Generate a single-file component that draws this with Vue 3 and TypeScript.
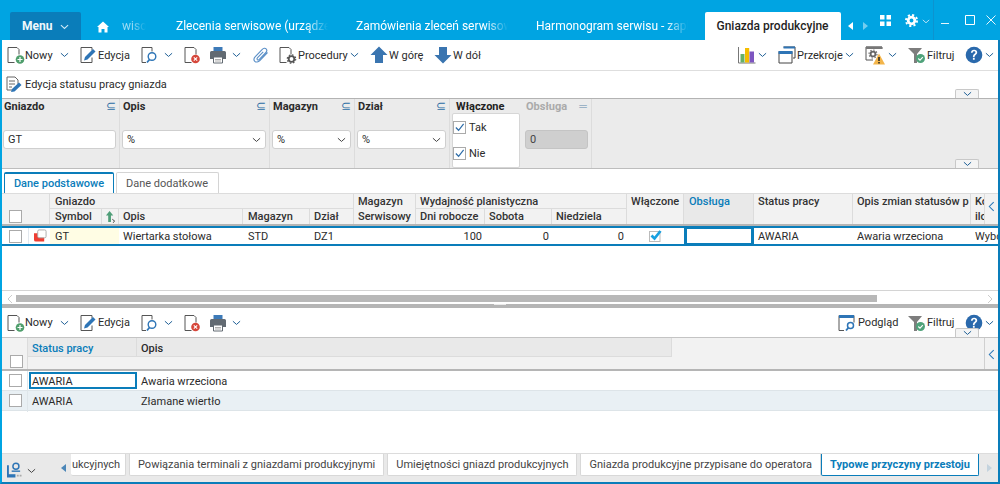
<script setup lang="ts">
interface Tool { icon: string; w: number; label?: string; chev?: boolean }
const topLeft: Tool[] = [
  { icon: 'new', w: 73, label: 'Nowy', chev: true },
  { icon: 'edit', w: 61, label: 'Edycja' },
  { icon: 'find', w: 43, chev: true },
  { icon: 'del', w: 25 },
  { icon: 'print', w: 43, chev: true },
  { icon: 'clip', w: 27 },
  { icon: 'proc', w: 91, label: 'Procedury', chev: true },
  { icon: 'up', w: 64, label: 'W górę' },
  { icon: 'down', w: 50, label: 'W dół' },
]
const topRight: Tool[] = [
  { icon: 'chart', w: 40, chev: true },
  { icon: 'cross', w: 87, label: 'Przekroje', chev: true },
  { icon: 'warn', w: 43, chev: true },
  { icon: 'filter', w: 57, label: 'Filtruj' },
  { icon: 'help', w: 29, chev: true },
]
const lowLeft: Tool[] = topLeft.slice(0, 5)
const lowRight: Tool[] = [
  { icon: 'view', w: 70, label: 'Podgląd' },
  { icon: 'filter', w: 57, label: 'Filtruj' },
  { icon: 'help', w: 29, chev: true },
]
const appTabs = ['Zlecenia serwisowe (urządzenia)', 'Zamówienia zleceń serwisowych', 'Harmonogram serwisu - zaplanowane']
const filters = [
  { name: 'Opis', cls: 'f-opis' },
  { name: 'Magazyn', cls: 'f-mag' },
  { name: 'Dział', cls: 'f-dzial' },
]
const bottomTabs = ['Powiązania terminali z gniazdami produkcyjnymi', 'Umiejętności gniazd produkcyjnych', 'Gniazda produkcyjne przypisane do operatora']
</script>

<template>
  <div class="win">
    <svg class="defs" aria-hidden="true">
      <symbol id="page" viewBox="0 0 18 18"><path d="M1 1.500h9l2 2v5M1 1.500v15h6.500" fill="none" stroke="#555" stroke-width="1"/></symbol>
      <symbol id="new" viewBox="0 0 18 18"><use href="#page"/><circle cx="13" cy="13.500" r="4.300" fill="#4f9e6c"/><path d="M13 11v5M10.500 13.500h5" stroke="#fff" stroke-width="1.200"/></symbol>
      <symbol id="edit" viewBox="0 0 18 18"><path d="M1 1.500h11v3M1 1.500v15h11v-5" fill="none" stroke="#555"/><path d="M4 14.500l1-3.500 8-8 2.500 2.500-8 8z" fill="#2e75b6"/></symbol>
      <symbol id="find" viewBox="0 0 18 18"><path d="M1 1.500h10v4M1 1.500v15h4" fill="none" stroke="#555"/><circle cx="11" cy="10.500" r="3.800" fill="none" stroke="#2e75b6" stroke-width="1.400"/><path d="M8.500 13.500L6 16.500" stroke="#2e75b6" stroke-width="1.800"/></symbol>
      <symbol id="del" viewBox="0 0 18 18"><use href="#page"/><circle cx="11.500" cy="13" r="4.300" fill="#d6463a"/><path d="M9.800 11.300l3.400 3.400M13.200 11.300l-3.400 3.400" stroke="#fff" stroke-width="1.100"/></symbol>
      <symbol id="print" viewBox="0 0 18 18"><path d="M4.500 1h9v5h-9z" fill="#3d7ab8"/><path d="M1 6.500a1.500 1.500 0 0 1 1.500-1.500h13A1.500 1.500 0 0 1 17 6.500V13h-3v-2H4v2H1z" fill="#626a72"/><path d="M4.500 11h9v6h-9z" fill="#fff" stroke="#626a72"/><path d="M6 13.500h6M6 15h6" stroke="#999" stroke-width=".8"/></symbol>
      <symbol id="clip" viewBox="0 0 18 18"><path d="M15.500 6.500L7.800 14.600c-1.600 1.700-3.800 1.900-5 .7-1.200-1.200-1-3 .5-4.600l7-7.300c1.200-1.200 2.800-1.500 3.800-.5 1 1 .8 2.500-.4 3.700l-6.400 6.700c-.7.7-1.500.8-2 .3-.5-.5-.4-1.300.3-2l5.600-5.800" fill="none" stroke="#5a8fc7" stroke-width="1.100"/></symbol>
      <symbol id="proc" viewBox="0 0 18 18"><use href="#page"/><circle cx="12.500" cy="13" r="2.800" fill="none" stroke="#555" stroke-width="1.800"/><circle cx="12.500" cy="13" r="4.200" fill="none" stroke="#555" stroke-width="1.200" stroke-dasharray="1.600 1.700"/></symbol>
      <symbol id="up" viewBox="0 0 18 18"><path d="M9 .5L17.500 9H13v8H5V9H.5z" fill="#3a75b0"/></symbol>
      <symbol id="down" viewBox="0 0 18 18"><path d="M9 17.500L17.500 9H13V1H5v8H.5z" fill="#3a75b0"/></symbol>
      <symbol id="chart" viewBox="0 0 18 18"><path d="M.5 1v16h17" fill="none" stroke="#777"/><path d="M2.500 8h4v8.500h-4z" fill="#67b168"/><path d="M7 2h4.200v14.500H7z" fill="#f5bd00"/><path d="M11.500 5.500h4.500v11h-4.500z" fill="#7d55c0"/></symbol>
      <symbol id="cross" viewBox="0 0 18 18"><path d="M5.500 1h11.500v11h-2" fill="none" stroke="#444"/><path d="M5.500.5h11.500v2H5.500z" fill="#2e75b6"/><path d="M1 5.500h13v11.500H1z" fill="#fff" stroke="#444"/><path d="M.5 5h14v3H.5z" fill="#2e75b6"/></symbol>
      <symbol id="warn" viewBox="0 0 20 20"><path d="M1 2h16v2M1 2v13h7" fill="none" stroke="#555"/><path d="M1 1.500h16v2.500H1z" fill="#777"/><circle cx="8" cy="9" r="2.400" fill="none" stroke="#666" stroke-width="1.800"/><circle cx="8" cy="9" r="4" fill="none" stroke="#666" stroke-width="1.100" stroke-dasharray="1.500 1.600"/><path d="M14 8.500l6 11H8z" fill="#f3b54a"/><path d="M14 12v4M14 17v1.500" stroke="#222" stroke-width="1.500"/></symbol>
      <symbol id="filter" viewBox="0 0 18 18"><path d="M0 2h14L9 8v9H6V8z" fill="#7d7d7d"/><circle cx="12.500" cy="12.500" r="4.500" fill="#4fa27a"/><path d="M10.300 12.500l1.700 1.700 2.800-3" fill="none" stroke="#fff" stroke-width="1.100"/></symbol>
      <symbol id="help" viewBox="0 0 18 18"><circle cx="9" cy="9" r="8.300" fill="#2a69ac"/><path d="M5.900 6.800C6 4.800 7.300 3.800 9.100 3.800c1.900 0 3.100 1.100 3.100 2.700 0 2.300-2.600 2.300-2.600 4.400H7.900c0-3 2.500-3 2.500-4.400 0-.8-.5-1.300-1.300-1.300-.9 0-1.400.6-1.500 1.600zM7.900 11.800h1.800v1.900H7.900z" fill="#fff"/></symbol>
      <symbol id="view" viewBox="0 0 18 18"><path d="M6 16.500H1V1.500h15v7" fill="none" stroke="#555"/><path d="M1 1h15v3H1z" fill="#2e75b6"/><circle cx="12.500" cy="11.500" r="3" fill="none" stroke="#2e75b6" stroke-width="1.500"/><path d="M10.300 13.800L8 16.500" stroke="#2e75b6" stroke-width="1.800"/></symbol>
      <symbol id="chev" viewBox="0 0 10 6"><path d="M1 1l4 3.600L9 1" fill="none" stroke="#1e5f96" stroke-width="1.100"/></symbol>
      <symbol id="chevgray" viewBox="0 0 10 6"><path d="M1 1l4 3.600L9 1" fill="none" stroke="#444" stroke-width="1.100"/></symbol>
      <symbol id="tick" viewBox="0 0 12 12"><path d="M2 6l3 3 5.500-7" fill="none" stroke="#2d6ca8" stroke-width="1.300"/></symbol>
    </svg>

    <header class="title">
      <div class="menu">Menu <svg class="tchev" viewBox="0 0 10 6"><path d="M1 1l4 3.600L9 1" fill="none" stroke="#cfe9f7" stroke-width="1.200"/></svg></div>
      <svg class="home" viewBox="0 0 12 12"><path d="M6 .5L12 6h-1.500v5.500H7.500V8h-3v3.500h-3V6H0z" fill="#fff"/></svg>
      <div class="app-tab first"><span>wiso</span></div>
      <div v-for="t in appTabs" :key="t" class="app-tab"><span>{{ t }}</span></div>
      <div class="app-active">Gniazda produkcyjne</div>
      <div class="tri left"></div>
      <div class="tri right"></div>
      <div class="wctl">
        <svg class="apps" viewBox="0 0 11 11"><path d="M0 0h4.500v4.500H0zM6.500 0H11v4.500H6.500zM0 6.500h4.500V11H0zM6.500 6.500H11V11H6.500z" fill="#fff"/></svg>
        <svg class="gear" viewBox="0 0 14 14"><circle cx="7" cy="7" r="3.600" fill="none" stroke="#fff" stroke-width="3"/><circle cx="7" cy="7" r="6" fill="none" stroke="#fff" stroke-width="2" stroke-dasharray="2.300 2.400"/></svg>
        <svg class="tchev2" viewBox="0 0 10 6"><path d="M1 1l4 3.600L9 1" fill="none" stroke="#cfe9f7" stroke-width="1.100"/></svg>
        <i class="sep"></i>
        <svg class="min" viewBox="0 0 8 8"><path d="M0 7.500h8" stroke="#e6f5fc"/></svg>
        <svg class="max" viewBox="0 0 10 10"><path d="M.5.500h9v9h-9z" fill="none" stroke="#fff"/></svg>
        <svg class="cls" viewBox="0 0 10 10"><path d="M.5.500l9 9M9.500.500l-9 9" stroke="#e6f5fc"/></svg>
      </div>
    </header>

    <div class="body">
      <div class="toolbar">
        <div class="tools">
          <div v-for="(b, i) in topLeft" :key="i" class="tool" :class="'t-' + b.icon" :style="{ width: b.w + 'px' }">
            <svg class="ic"><use :href="'#' + b.icon"/></svg>
            <span v-if="b.label">{{ b.label }}</span>
            <svg v-if="b.chev" class="chev"><use href="#chev"/></svg>
          </div>
        </div>
        <div class="tools">
          <div v-for="(b, i) in topRight" :key="i" class="tool" :class="'t-' + b.icon" :style="{ width: b.w + 'px' }">
            <svg class="ic"><use :href="'#' + b.icon"/></svg>
            <span v-if="b.label">{{ b.label }}</span>
            <svg v-if="b.chev" class="chev"><use href="#chev"/></svg>
          </div>
        </div>
      </div>

      <div class="subbar">
        <svg class="ic" viewBox="0 0 18 18"><path d="M2 1h8l3 3v4M2 1v13h5M4 5h6M4 8h6M4 11h3" fill="none" stroke="#666"/><path d="M6 16l1-3 7-6.500 2.500 2.500-7 6.500z" fill="#2e75b6"/></svg>
        <span>Edycja statusu pracy gniazda</span>
        <div class="fold up"><svg class="chev nom"><use href="#chev"/></svg></div>
      </div>

      <div class="filter">
        <div class="fcol f-gn">
          <div class="fhead">Gniazdo<em>⊆</em></div>
          <div class="finput">GT</div>
        </div>
        <div v-for="f in filters" :key="f.name" class="fcol" :class="f.cls">
          <div class="fhead">{{ f.name }}<em>⊆</em></div>
          <div class="finput">%<svg class="fchev"><use href="#chevgray"/></svg></div>
        </div>
        <div class="fcol f-wl">
          <div class="fhead wl">Włączone</div>
          <div class="fbox">
            <label><i class="box"><svg viewBox="0 0 12 12"><use href="#tick"/></svg></i>Tak</label>
            <label><i class="box"><svg viewBox="0 0 12 12"><use href="#tick"/></svg></i>Nie</label>
          </div>
        </div>
        <div class="fcol f-ob">
          <div class="fhead dis">Obsługa<em>=</em></div>
          <div class="finput off">0</div>
        </div>
        <div class="fold down"><svg class="chev nom"><use href="#chev"/></svg></div>
      </div>

      <div class="tabs">
        <div class="tab on">Dane podstawowe</div>
        <div class="tab">Dane dodatkowe</div>
      </div>

      <div class="grid head">
        <div class="h c-sel"><i class="cb"></i></div>
        <div class="h c-gn">Gniazdo</div>
        <div class="h c-sym">Symbol</div>
        <div class="h c-sort"><svg viewBox="0 0 12 14"><path d="M5 1L1 6h2.500v7h3V6H9z" fill="#4f9e78"/><path d="M8 10l2.500 2-2 2" fill="none" stroke="#333"/></svg></div>
        <div class="h c-op">Opis</div>
        <div class="h c-mg">Magazyn</div>
        <div class="h c-dz">Dział</div>
        <div class="h c-ms">Magazyn<br>Serwisowy</div>
        <div class="h c-wy">Wydajność planistyczna</div>
        <div class="h c-dr">Dni robocze</div>
        <div class="h c-so">Sobota</div>
        <div class="h c-ni">Niedziela</div>
        <div class="h c-wl">Włączone</div>
        <div class="h c-ob act">Obsługa</div>
        <div class="h c-st">Status pracy</div>
        <div class="h c-oz">Opis zmian statusów p</div>
        <div class="h c-ko">Ko<br>ilo</div>
        <div class="h c-ar"><svg class="side" viewBox="0 0 8 12"><path d="M6.500 1L1.500 6l5 5" fill="none" stroke="#2b78b8" stroke-width="1.200"/></svg></div>
      </div>
      <div class="grid row">
        <div class="d"><i class="cb"></i></div>
        <div class="d ric"><svg viewBox="0 0 14 13"><path d="M0 4h11v9H2a2 2 0 0 1-2-2z" fill="#ee3e33"/><rect x="4" y=".5" width="9" height="8.500" rx="1.500" fill="#fff" stroke="#aaa"/></svg></div>
        <div class="d sym">GT</div>
        <div class="d tight4">Wiertarka stołowa</div>
        <div class="d">STD</div>
        <div class="d tight4">DZ1</div>
        <div class="d"></div>
        <div class="d num">100</div>
        <div class="d num">0</div>
        <div class="d num">0</div>
        <div class="d mid"><svg class="chk" viewBox="0 0 13 13"><rect x=".5" y="2.500" width="10.500" height="10" fill="#fff" stroke="#bbb"/><path d="M2.500 6.500L5.500 9.500 11.500 2" fill="none" stroke="#18a0e0" stroke-width="2.800"/></svg></div>
        <div class="d sel"></div>
        <div class="d tight4">AWARIA</div>
        <div class="d tight4">Awaria wrzeciona</div>
        <div class="d wide2">Wybór</div>
      </div>
      <div class="spacer1"></div>
      <div class="hscroll">
        <svg class="sarrow" viewBox="0 0 6 10"><path d="M5 1L1 5l4 4" fill="none" stroke="#ccc"/></svg>
        <div class="thumb"></div>
        <svg class="sarrow" viewBox="0 0 6 10"><path d="M1 1l4 4-4 4" fill="none" stroke="#ccc"/></svg>
      </div>
      <div class="splitter"><i></i></div>

      <div class="toolbar low">
        <div class="tools">
          <div v-for="(b, i) in lowLeft" :key="i" class="tool" :class="'t-' + b.icon" :style="{ width: b.w + 'px' }">
            <svg class="ic"><use :href="'#' + b.icon"/></svg>
            <span v-if="b.label">{{ b.label }}</span>
            <svg v-if="b.chev" class="chev"><use href="#chev"/></svg>
          </div>
        </div>
        <div class="tools">
          <div v-for="(b, i) in lowRight" :key="i" class="tool" :class="'t-' + b.icon" :style="{ width: b.w + 'px' }">
            <svg class="ic"><use :href="'#' + b.icon"/></svg>
            <span v-if="b.label">{{ b.label }}</span>
            <svg v-if="b.chev" class="chev"><use href="#chev"/></svg>
          </div>
        </div>
        <div class="fold low-fold"><svg class="chev nom"><use href="#chev"/></svg></div>
      </div>

      <div class="g2 ghead">
        <div class="g2sel"><i class="cb"></i></div>
        <div class="g2t act">Status pracy</div>
        <div class="g2t">Opis</div>
        <div class="g2rest"></div>
        <div class="g2ar"><svg class="side" viewBox="0 0 8 12"><path d="M6.500 1L1.500 6l5 5" fill="none" stroke="#2b78b8" stroke-width="1.200"/></svg></div>
      </div>
      <div class="g2 grow">
        <div class="g2c"><i class="cb"></i></div>
        <div class="g2st cur">AWARIA</div>
        <div class="g2d">Awaria wrzeciona</div>
      </div>
      <div class="g2 grow alt">
        <div class="g2c"><i class="cb"></i></div>
        <div class="g2st">AWARIA</div>
        <div class="g2d">Złamane wiertło</div>
      </div>
      <div class="spacer2"></div>

      <footer class="bottom">
        <svg class="bic" viewBox="0 0 16 16"><path d="M1 3v12" fill="none" stroke="#2e75b6" stroke-width="2"/><path d="M0 12.500h9V16H0z" fill="#2e75b6"/><circle cx="9.500" cy="4" r="3.200" fill="none" stroke="#2e75b6" stroke-width="1.600"/><path d="M5 8.500h9v1.500H5z" fill="#2e75b6"/><path d="M10.500 13h2v2h-2zM13.500 13h2v2h-2z" fill="#aaa"/></svg>
        <svg class="bchev"><use href="#chevgray"/></svg>
        <div class="tri left dark"></div>
        <div class="btab clip">ukcyjnych</div>
        <div v-for="t in bottomTabs" :key="t" class="btab">{{ t }}</div>
        <div class="btab on">Typowe przyczyny przestoju</div>
        <div class="tri right pale"></div>
      </footer>
    </div>
  </div>
</template>

<style>
html, body { margin: 0; padding: 0; background: #fff; }
</style>

<style scoped>
.win { width: 1000px; height: 484px; box-sizing: border-box; display: flex; flex-direction: column; font: 400 11px/15px Roboto, "Liberation Sans", sans-serif; color: #2b2b2b; overflow: hidden; background: #fff; }
.defs { position: absolute; width: 0; height: 0; }
.title { height: 40px; flex: none; background: #00a4e2; display: flex; align-items: flex-end; color: #fff; font-size: 12px; }
.menu { margin-left: 10px; width: 71px; height: 28px; box-sizing: border-box; padding: 1px 0 0 12px; background: #0a7dba; border-radius: 2px 2px 0 0; font-weight: 700; display: flex; align-items: center; color: #f0f8fc; }
.tchev { width: 9px; height: 6px; margin-left: 8px; }
.home { width: 12px; height: 12px; margin: 0 0 7px 16px; flex: none; }
.app-tab { height: 28px; width: 180px; flex: none; display: flex; align-items: center; padding: 1px 0 0 11px; box-sizing: border-box; }
.app-tab span { display: block; width: 152px; white-space: nowrap; overflow: hidden; -webkit-mask-image: linear-gradient(90deg, #000 85%, transparent); mask-image: linear-gradient(90deg, #000 85%, transparent); }
.app-tab.first { width: 56px; padding-left: 13px; }
.app-tab.first span { width: 24px; -webkit-mask-image: linear-gradient(90deg, #fff9 40%, transparent); mask-image: linear-gradient(90deg, #fff9 40%, transparent); }
.app-active { width: 136px; height: 28px; box-sizing: border-box; padding: 1px 1px 0 0; background: #fff; color: #1f1f1f; font-weight: 500; display: flex; align-items: center; justify-content: center; border-radius: 2px 2px 0 0; flex: none; }
.tri { width: 0; height: 0; border-style: solid; border-width: 4px 0 4px 5px; border-color: transparent transparent transparent #fff; flex: none; }
.title .tri { margin-bottom: 10px; }
.title .tri.left { margin-left: 7px; }
.title .tri.right { margin-left: 10px; opacity: .45; }
.tri.left { border-width: 4px 5px 4px 0; border-color: transparent #fff transparent transparent; }
.wctl { flex: 1; align-self: stretch; display: flex; align-items: flex-start; min-width: 0; }
.apps { width: 11px; height: 11px; margin: 15px 0 0 12px; flex: none; }
.gear { width: 13px; height: 13px; margin: 14px 0 0 14px; flex: none; }
.tchev2 { width: 8px; height: 5px; margin: 19px 0 0 4px; flex: none; }
.sep { width: 1px; height: 40px; background: #0d93cf; margin-left: 3px; flex: none; }
.min { width: 8px; height: 8px; margin: 16px 0 0 7px; flex: none; }
.max { width: 10px; height: 10px; margin: 15px 0 0 16px; flex: none; }
.cls { width: 10px; height: 10px; margin: 15px 0 0 11px; flex: none; }

.body { flex: 1; display: flex; flex-direction: column; min-height: 0; border-left: 2px solid #00a4e2; border-right: 2px solid #0a7dba; border-bottom: 2px solid #0a7dba; }
.toolbar { height: 31px; box-sizing: border-box; flex: none; display: flex; justify-content: space-between; align-items: center; padding: 0 4px 0 5px; border-bottom: 1px solid #dedede; position: relative; }
.tools { display: flex; align-items: center; }
.tool { display: flex; align-items: center; white-space: nowrap; box-sizing: border-box; flex: none; padding-right: 11px; }
.tool.t-help { padding-right: 0; }
.ic { width: 18px; height: 18px; flex: none; margin-right: 1px; display: block; }
.t-new .ic, .t-edit .ic { margin-right: 0; }
.t-view .ic { margin-right: 2px; }
.t-warn .ic { width: 20px; height: 20px; }
.chev { width: 9px; height: 6px; margin-left: auto; flex: none; }
.chev.nom { margin: 0; }
.subbar { flex: none; display: flex; align-items: center; padding-left: 3px; position: relative; border-bottom: 1px solid #b3b3b3; box-sizing: border-box; height: 28px; }
.subbar .ic { margin-right: 2px; }
.fold { position: absolute; width: 24px; height: 9px; box-sizing: border-box; background: #f4f4f4; border: 1px solid #c8c8c8; border-bottom: 0; border-radius: 2px 2px 0 0; display: flex; align-items: center; justify-content: center; right: 19px; bottom: 0; }
.filter { height: 70px; box-sizing: border-box; flex: none; background: #ebebeb; display: flex; border-bottom: 1px solid #bdbdbd; position: relative; }
.fcol { box-sizing: border-box; border-right: 1px solid #dcdcdc; padding: 0 3px 0 2px; flex: none; }
.f-gn { width: 118px; padding-left: 1px; }
.f-opis { width: 150px; }
.f-mag { width: 85px; }
.f-dzial { width: 95px; }
.f-wl { width: 72px; padding: 0 2px; border-right: 0; }
.f-ob { width: 70px; padding-left: 3px; }
.fhead { height: 15px; font-weight: 700; line-height: 15px; display: flex; justify-content: space-between; align-items: center; margin-bottom: 16px; padding-left: 1px; }
.fhead em { font: 12px/15px "DejaVu Sans", sans-serif; color: #2b6ea5; }
.fhead.wl { color: #222; margin: 0; padding-left: 4px; height: 14px; }
.fhead.dis { color: #aaa; }
.fhead.dis em { color: #9db3c6; }
.finput { height: 19px; box-sizing: border-box; background: #fff; border: 1px solid #cfcfcf; border-radius: 3px; display: flex; justify-content: space-between; align-items: center; padding: 0 4px; }
.finput.off { background: #cfcfcf; color: #444; border-color: #c4c4c4; }
.fchev { width: 9px; height: 6px; }
.fbox { height: 55px; background: #fff; border: 1px solid #d6d6d6; border-radius: 2px; box-sizing: border-box; padding: 6px 0 0 0; }
.fbox label { display: flex; align-items: center; height: 15px; margin-bottom: 11px; gap: 3px; }
.box { width: 11px; height: 11px; border: 1px solid #aaa; display: block; background: #fff; }
.box svg { display: block; width: 11px; height: 11px; }
.tabs { height: 24px; flex: none; display: flex; align-items: flex-end; gap: 2px; padding-left: 2px; box-sizing: border-box; }
.tab { height: 21px; box-sizing: border-box; border: 1px solid #d4d4d4; border-bottom: 0; border-radius: 2px 2px 0 0; padding: 0 10px 0 9px; display: flex; align-items: center; color: #555; }
.tab.on { width: 110px; justify-content: center; padding: 0; color: #0a7dba; font-weight: 500; border: 1px solid #0a7dba; border-bottom: 0; border-top-width: 2px; }
.grid { display: grid; grid-template-columns: 27px 21px 52px 17px 124px 67px 44px 62px 69px 67px 75px 57px 70px 99px 118px 13px 14px; flex: none; }
.head { grid-template-rows: 15px 15px; background: #f2f2f2; border-top: 1px solid #dcdcdc; border-bottom: 2px solid #b5b5b5; }
.h { font-weight: 500; padding: 0 0 0 5px; border-right: 1px solid #dcdcdc; white-space: nowrap; overflow: hidden; color: #333; box-sizing: border-box; min-width: 0; }
.c-sel { grid-area: 1 / 1 / 3 / 3; padding: 16px 0 0 7px; }
.c-gn { grid-area: 1 / 3 / 2 / 8; border-bottom: 1px solid #dcdcdc; }
.c-sym { grid-area: 2 / 3; }
.c-sort { grid-area: 2 / 4; padding: 1px 0 0 3px; }
.c-sort svg { width: 11px; height: 13px; display: block; }
.c-op { grid-area: 2 / 5; padding-left: 4px; }
.c-mg { grid-area: 2 / 6; }
.c-dz { grid-area: 2 / 7; padding-left: 4px; }
.c-ms { grid-area: 1 / 8 / 3 / 9; padding-left: 4px; }
.c-wy { grid-area: 1 / 9 / 2 / 12; border-bottom: 1px solid #dcdcdc; padding-left: 4px; }
.c-dr { grid-area: 2 / 9; padding-left: 4px; }
.c-so { grid-area: 2 / 10; padding-left: 4px; }
.c-ni { grid-area: 2 / 11; padding-left: 4px; }
.c-wl { grid-area: 1 / 12 / 3 / 13; padding-left: 4px; }
.c-ob { grid-area: 1 / 13 / 3 / 14; }
.act { color: #0a7dba; background: #e9e9e9; }
.c-st { grid-area: 1 / 14 / 3 / 15; padding-left: 4px; }
.c-oz { grid-area: 1 / 15 / 3 / 16; padding-left: 4px; }
.c-ko { grid-area: 1 / 16 / 3 / 17; padding-left: 4px; border: 0; }
.c-ar { grid-area: 1 / 17 / 3 / 18; border-left: 1px solid #dcdcdc; border-right: 0; padding: 7px 0 0 3px; }
.side { width: 7px; height: 11px; display: block; }
.cb { display: block; width: 11px; height: 11px; border: 1px solid #aaa; background: #fff; }
.row { height: 20px; box-sizing: border-box; border-top: 2px solid #0a7dba; border-bottom: 2px solid #0a7dba; line-height: 17px; }
.d { padding: 0 0 0 5px; white-space: nowrap; overflow: hidden; min-width: 0; box-sizing: border-box; }
.d.tight4 { padding-left: 4px; }
.d:first-child { padding: 2px 0 0 7px; border-right: 1px solid #e2e8ee; }
.ric { padding: 1px 0 0 5px; }
.ric svg { width: 13px; height: 13px; display: block; }
.sym { grid-column: 3 / 5; background: #fffde4; }
.num { text-align: right; padding: 0 3px 0 0; }
.mid { padding: 1px 0 0 22px; }
.chk { width: 13px; height: 13px; display: block; }
.sel { border: 3px solid #0a7dba; border-top-width: 1px; border-bottom-width: 1px; }
.wide2 { grid-column: 16 / 18; padding-left: 4px; }
.spacer1 { height: 44px; flex: none; }
.hscroll { height: 14px; flex: none; box-sizing: border-box; border-top: 1px solid #d4d4d4; display: flex; align-items: center; padding: 2px 5px 0; gap: 3px; }
.sarrow { width: 6px; height: 10px; flex: none; }
.thumb { width: 861px; height: 7px; background: #b8b8b8; margin-right: auto; }
.splitter { height: 4px; flex: none; background: #b5b5b5; display: flex; justify-content: center; }
.splitter i { width: 12px; height: 1px; background: #fff; opacity: .7; }
.toolbar.low { height: 30px; border-bottom: 1px solid #c4c4c4; }
.g2 { display: grid; grid-template-columns: 26px 109px 535px 1fr 14px; flex: none; }
.ghead { height: 33px; box-sizing: border-box; background: #f2f2f2; border-bottom: 2px solid #b5b5b5; grid-template-rows: 19px 12px; }
.g2sel { grid-row: 1 / 3; padding: 17px 0 0 8px; border-right: 1px solid #dcdcdc; }
.g2t { background: #e9e9e9; border-right: 1px solid #dcdcdc; border-bottom: 1px solid #dcdcdc; font-weight: 500; line-height: 21px; height: 19px; box-sizing: border-box; padding-left: 4px; }
.g2rest { background: #f2f2f2; }
.g2ar { grid-row: 1 / 3; grid-column: 5; border-left: 1px solid #d0d0d0; padding: 11px 0 0 3px; }
.grow { height: 20px; box-sizing: border-box; border-bottom: 1px solid #dde4e8; line-height: 21px; }
.alt { background: #e9f0f4; }
.g2c { padding: 3px 0 0 7px; border-right: 1px solid #dfe6ea; }
.g2st { padding-left: 4px; }
.g2st.cur { box-shadow: inset 0 0 0 2px #0a7dba; margin: 1px 0 0 1px; height: 17px; line-height: 19px; padding-left: 3px; }
.g2d { padding-left: 4px; }
.spacer2 { flex: 1; }
.bottom { height: 29px; flex: none; background: #e9e9e9; display: flex; align-items: flex-start; border-top: 1px solid #dcdcdc; box-sizing: border-box; }
.bic { width: 15px; height: 16px; margin: 8px 0 0 5px; flex: none; }
.bchev { width: 9px; height: 6px; margin: 14px 0 0 5px; flex: none; }
.tri.dark { border-color: transparent #4c87b8 transparent transparent; margin: 10px 0 0 25px; }
.btab { height: 22px; box-sizing: border-box; background: #fff; border: 1px solid #d8d8d8; border-top: 0; border-radius: 0 0 2px 2px; margin-left: 3px; padding: 0 8px; display: flex; align-items: center; color: #444; white-space: nowrap; flex: none; }
.btab.clip { margin-left: 5px; width: 55px; border-left: 0; padding: 0 0 0 1px; }
.btab.on { color: #0a7dba; font-weight: 700; border: 1px solid #0a7dba; border-top: 0; width: 158px; justify-content: center; padding: 0; margin-left: 0; }
.tri.pale { border-color: transparent transparent transparent #c4d3de; margin: 10px 0 0 8px; }
</style>
